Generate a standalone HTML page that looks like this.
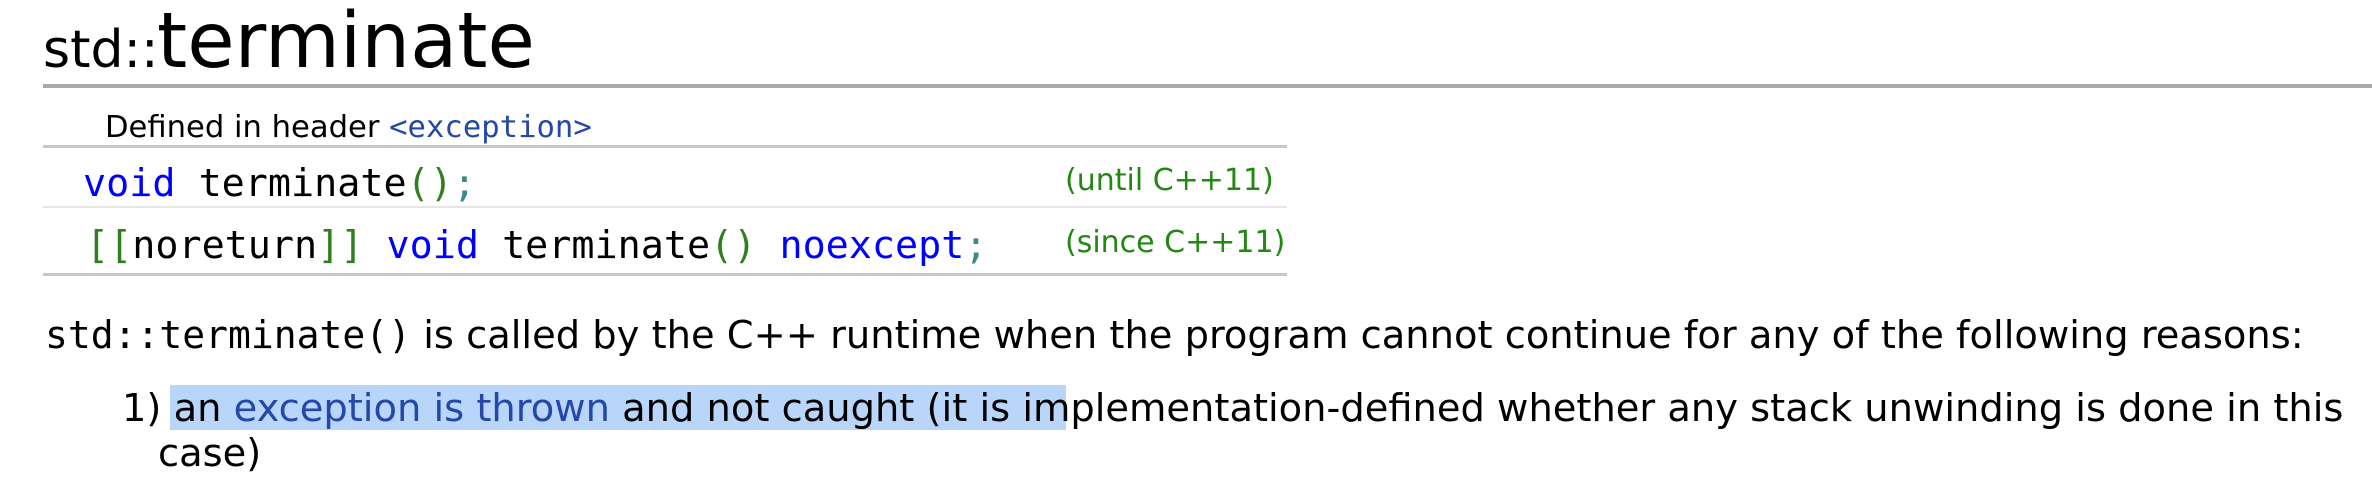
<!DOCTYPE html>
<html><head><meta charset="utf-8"><style>
body{margin:0;width:2372px;height:488px;background:#fff;position:relative;overflow:hidden;font-family:"DejaVu Sans","Liberation Sans",sans-serif;color:#000}
.a{position:absolute;white-space:nowrap;line-height:1}
.m{font-family:"DejaVu Sans Mono","Liberation Mono",monospace}
.kw{color:#0000ff}.br{color:#2f7f1f}.sc{color:#3a8a8a}.v{color:#228811}
.ln{position:absolute;left:43px}
</style></head><body>
<div class="a" style="left:43px;top:0;height:63px;"><span style="font-size:52px;position:absolute;left:0;bottom:-13px;">std::</span><span style="font-size:77px;position:absolute;left:114px;bottom:-17px;">terminate</span></div>
<div class="ln" style="top:84px;width:2329px;height:4px;background:#a9a9a9"></div>
<div class="a" style="left:105px;top:113px;font-size:30.6px;">Defined in header <span class="m" style="color:#2447a8">&lt;exception&gt;</span></div>
<div class="ln" style="top:145px;width:1244px;height:3px;background:#c8c8c8"></div>
<div class="a m" style="left:83px;top:165px;font-size:38.4px;"><span class="kw">void</span> terminate<span class="br">()</span><span class="sc">;</span></div>
<div class="a v" style="left:1065px;top:166px;font-size:30px;">(until C++11)</div>
<div class="ln" style="top:206px;width:1244px;height:2px;background:#e6e6e6"></div>
<div class="a m" style="left:86px;top:227px;font-size:38.4px;"><span class="br">[[</span>noreturn<span class="br">]]</span> <span class="kw">void</span> terminate<span class="br">()</span> <span class="kw">noexcept</span><span class="sc">;</span></div>
<div class="a v" style="left:1065px;top:228px;font-size:30px;">(since C++11)</div>
<div class="ln" style="top:273px;width:1244px;height:3px;background:#c8c8c8"></div>
<div class="a" style="left:45px;top:316px;font-size:38.4px;"><span class="m" style="font-size:38px">std::terminate()</span> is called by the C++ runtime when the program cannot continue for any of the following reasons:</div>
<div style="position:absolute;left:170px;top:385px;width:896px;height:45px;background:#b9d6fa"></div>
<div class="a" style="left:122px;top:390px;font-size:38.4px;">1) an <span style="color:#2447a8">exception is thrown</span> and not caught (it is implementation-defined whether any stack unwinding is done in this</div>
<div class="a" style="left:158px;top:435px;font-size:38.4px;">case)</div>
</body></html>
